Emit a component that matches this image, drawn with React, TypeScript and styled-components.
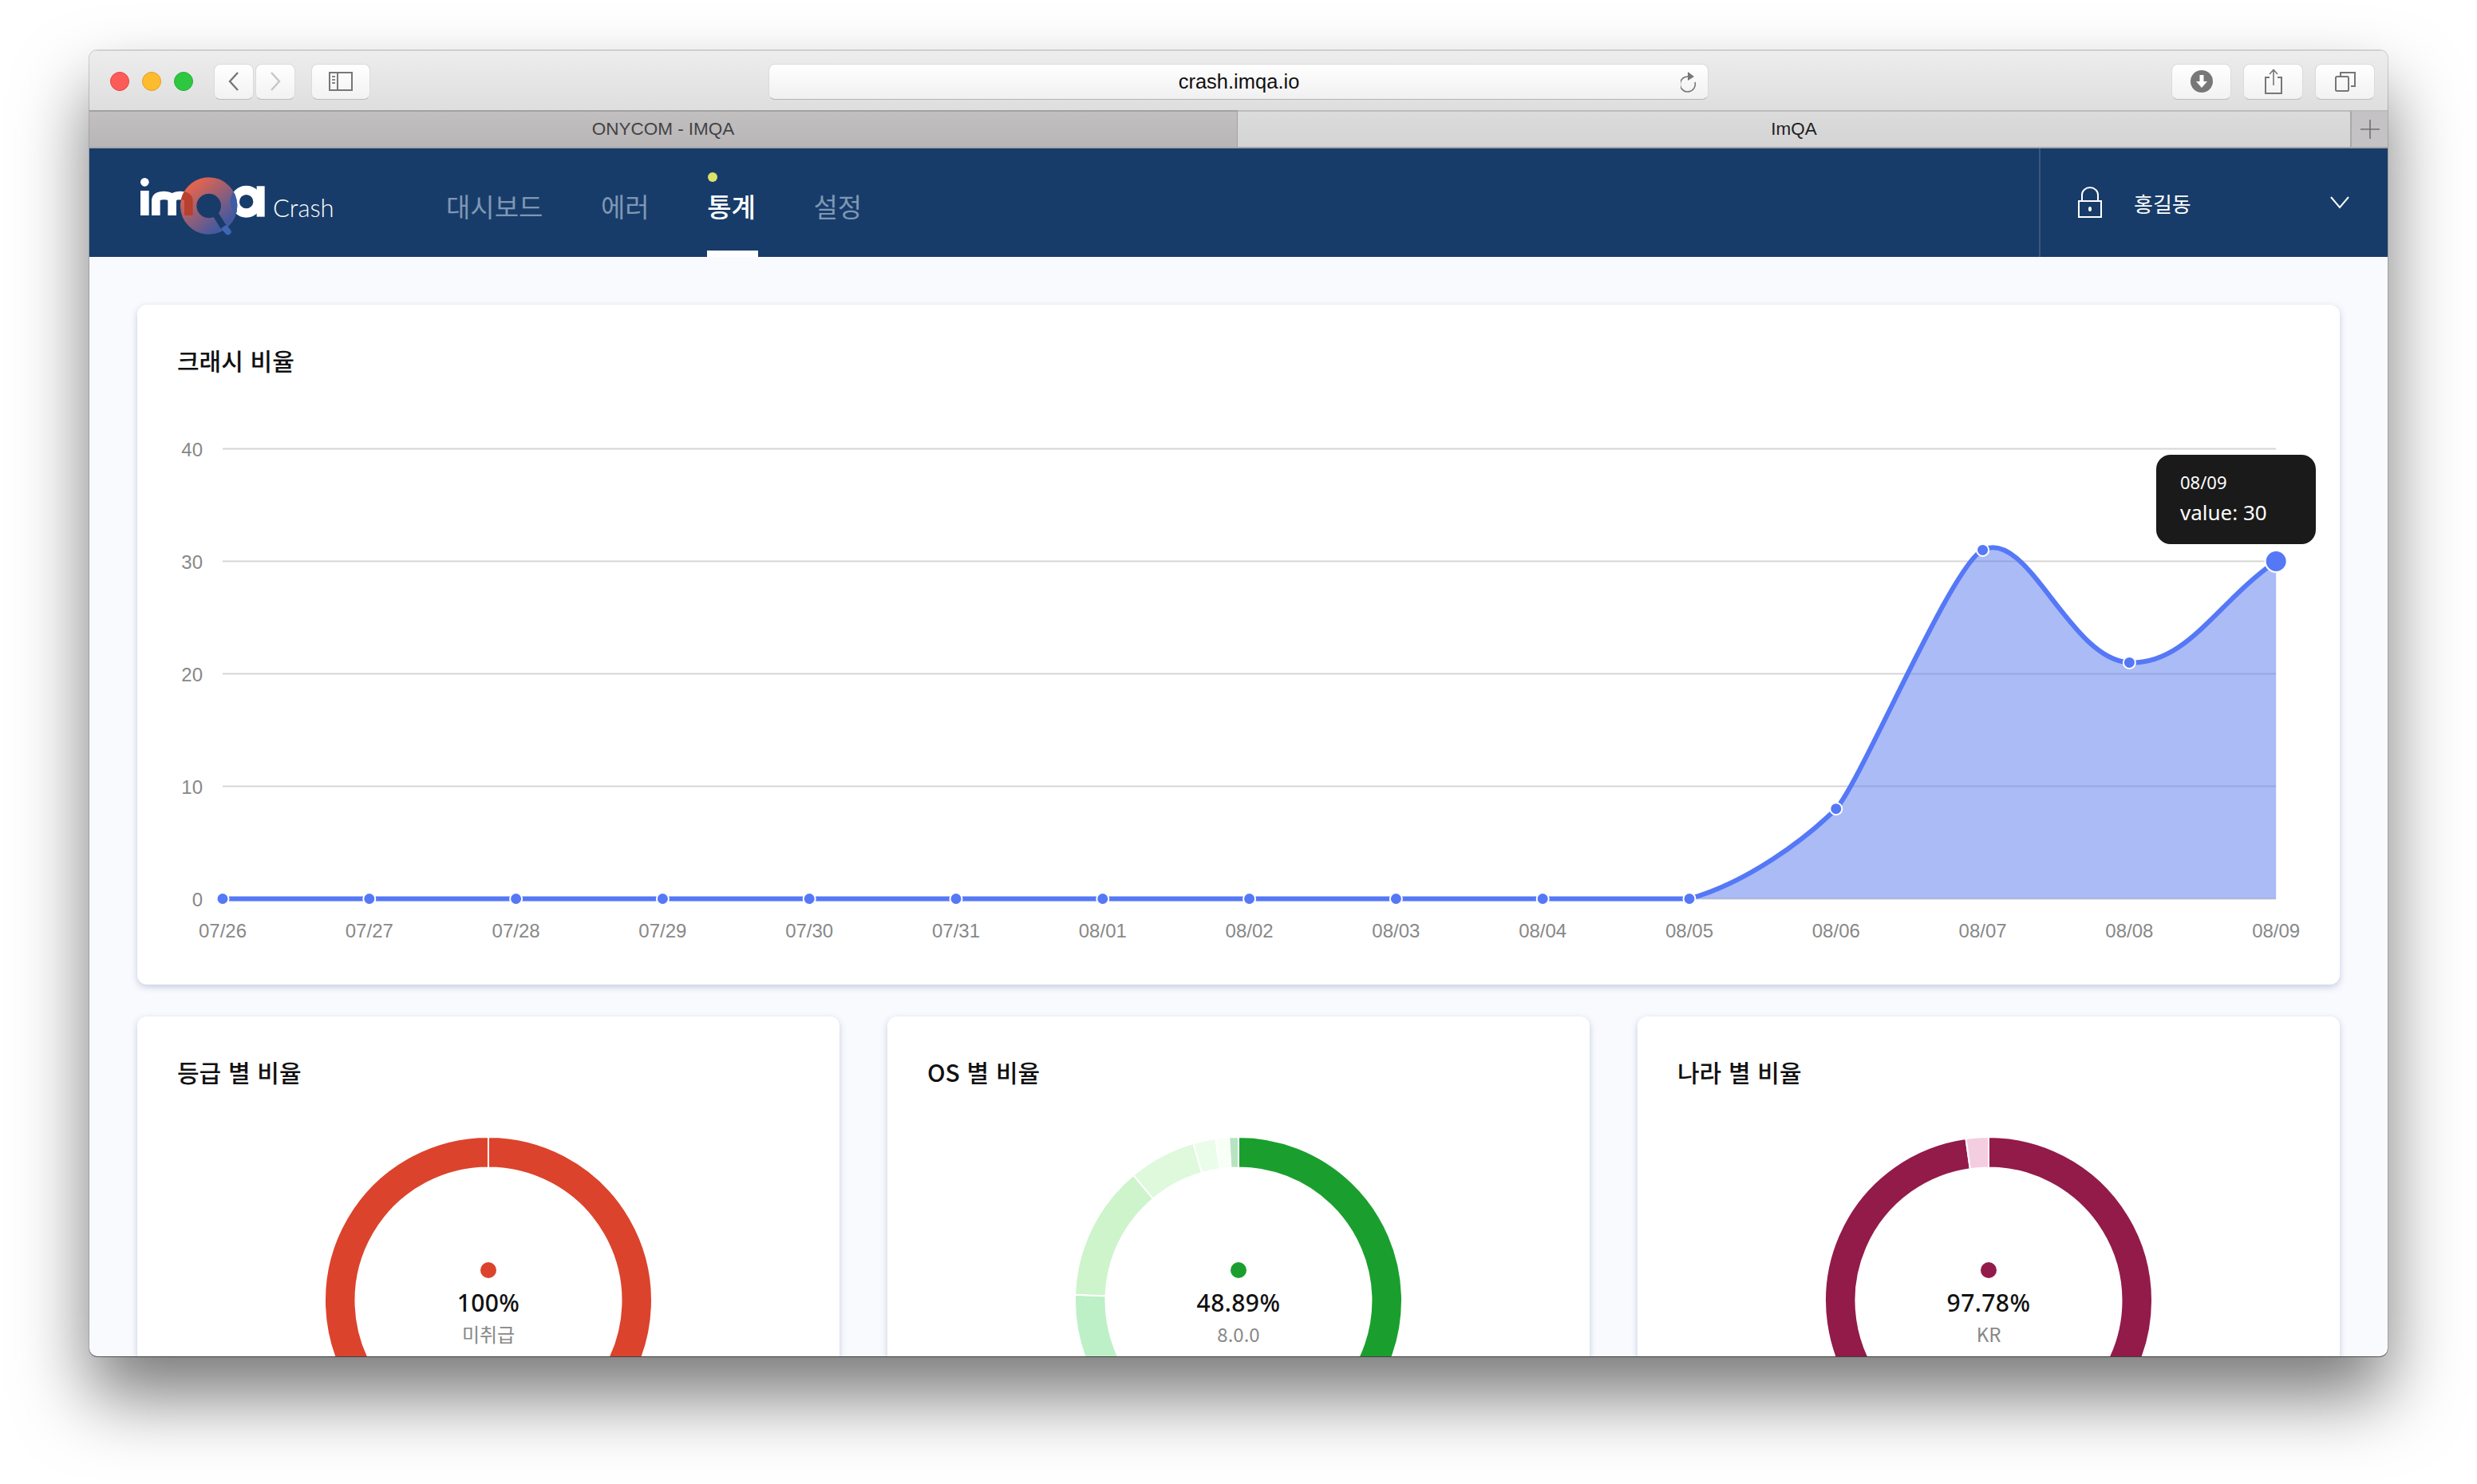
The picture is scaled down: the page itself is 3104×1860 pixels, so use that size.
import React from "react";
import styled, { createGlobalStyle } from "styled-components";

const KR = `"Noto Sans CJK KR", "Noto Sans", sans-serif`;
const LATIN = `"Noto Sans", "Noto Sans CJK KR", sans-serif`;
const HELV = `"Liberation Sans", Arial, sans-serif`;

const Global = createGlobalStyle`
  html, body { margin: 0; padding: 0; background: #fff; }
  body { width: 3104px; height: 1860px; overflow: hidden; font-family: ${LATIN}; }
  * { box-sizing: border-box; }
`;

const Page = styled.div`
  width: 3104px;
  height: 1860px;
  padding: 63px 112px 0;
`;
const Win = styled.div`
  width: 2880px;
  height: 1637px;
  border-radius: 10px;
  overflow: hidden;
  display: flex;
  flex-direction: column;
  background: #f9fafe;
  box-shadow: 0 50px 90px rgba(0, 0, 0, 0.53), 0 0 0 1px rgba(0, 0, 0, 0.16), 0 1px 0 rgba(0, 0, 0, 0.45);
`;

/* ---------- browser chrome ---------- */
const TitleBar = styled.div`
  height: 75px;
  flex: none;
  display: flex;
  align-items: center;
  padding: 2px 16px 0 26px;
  background: linear-gradient(#eeedee, #dfdedf);
  border-top: 1px solid #d6d5d6;
`;
const LeftTools = styled.div`
  width: 825px;
  flex: none;
  display: flex;
  align-items: center;
`;
const Light = styled.span<{ $c: string; $b: string }>`
  width: 24px;
  height: 24px;
  border-radius: 50%;
  margin-right: 16px;
  background: ${(p) => p.$c};
  border: 1px solid ${(p) => p.$b};
`;
const ToolButton = styled.div<{ $w?: number; $gap?: number }>`
  width: ${(p) => p.$w ?? 74}px;
  height: 45px;
  flex: none;
  margin-left: ${(p) => p.$gap ?? 0}px;
  display: flex;
  align-items: center;
  justify-content: center;
  border-radius: 8px;
  background: linear-gradient(#ffffff, #f3f2f3);
  border: 1px solid #dcdadc;
  border-bottom-color: #bdbbbd;
`;
const UrlBar = styled.div`
  width: 1178px;
  height: 45px;
  flex: none;
  position: relative;
  display: flex;
  align-items: center;
  justify-content: center;
  padding-left: 1px;
  border-radius: 8px;
  background: linear-gradient(#ffffff, #f1f0f1);
  border: 1px solid #dcdadc;
  border-bottom-color: #b5b3b5;
  font: 25.5px ${HELV};
  color: #111;
`;
const Reload = styled.svg`
  position: absolute;
  right: 12px;
  top: 8px;
`;
const RightTools = styled.div`
  margin-left: auto;
  display: flex;
  gap: 15px;
`;
const TabBar = styled.div`
  height: 48px;
  flex: none;
  display: flex;
`;
const Tab = styled.div<{ $active?: boolean }>`
  display: flex;
  align-items: center;
  justify-content: center;
  font: 22.5px ${HELV};
  width: ${(p) => (p.$active ? 1394 : 1439)}px;
  color: ${(p) => (p.$active ? "#222" : "#444")};
  background: ${(p) => (p.$active ? "linear-gradient(#dcdbdc, #d5d4d5)" : "linear-gradient(#c1bfc0, #b8b6b7)")};
  border-top: 2px solid ${(p) => (p.$active ? "#bdbbbd" : "#a3a1a3")};
  border-bottom: 2px solid #a8a6a8;
  border-right: ${(p) => (p.$active ? "none" : "1px solid #a3a1a3")};
`;
const PlusTab = styled.div`
  flex: 1;
  display: flex;
  align-items: center;
  justify-content: center;
  background: #c4c2c4;
  border-top: 2px solid #bdbbbd;
  border-bottom: 2px solid #a8a6a8;
  border-left: 2px solid #a9a7a9;
`;

/* ---------- app header ---------- */
const Header = styled.header`
  height: 136px;
  flex: none;
  display: flex;
  align-items: stretch;
  background: #183c69;
  padding-left: 58px;
`;
const Brand = styled.div`
  width: 389px;
  flex: none;
  display: flex;
  align-items: center;
`;
const LogoMark = styled.svg`
  flex: none;
  margin-top: 12px;
`;
const BrandName = styled.span`
  margin: 11px 0 0 2px;
  font: 300 31px Lato, sans-serif;
  color: #fff;
`;
const Nav = styled.nav`
  display: flex;
  gap: 72.5px;
`;
const NavItem = styled.div<{ $active?: boolean }>`
  position: relative;
  display: flex;
  align-items: center;
  padding-top: 8px;
  font: ${(p) => (p.$active ? 500 : 400)} 33px ${KR};
  color: ${(p) => (p.$active ? "#fff" : "#7e97b4")};
`;
const NavDot = styled.i`
  position: absolute;
  left: 1px;
  top: 30px;
  width: 12px;
  height: 12px;
  border-radius: 50%;
  background: #dce26a;
`;
const NavBar = styled.i`
  position: absolute;
  left: 0;
  bottom: 0;
  width: 64px;
  height: 8px;
  background: #fff;
`;
const UserBox = styled.div`
  margin-left: auto;
  width: 437px;
  display: flex;
  align-items: center;
  padding: 0 48px 0 46px;
  border-left: 2px solid #38587f;
  color: #fff;
`;
const UserName = styled.span`
  margin: 0 auto 0 39px;
  font: 400 26px ${KR};
`;

/* ---------- dashboard ---------- */
const Content = styled.main`
  flex: 1;
  padding: 60px;
  display: flex;
  flex-direction: column;
  gap: 40px;
`;
const Card = styled.section`
  position: relative;
  background: #fff;
  border-radius: 12px;
  box-shadow: 0 3px 8px rgba(70, 100, 150, 0.3);
`;
const CardTitle = styled.h2`
  margin: 0;
  height: 138px;
  padding-left: 50px;
  display: flex;
  align-items: center;
  font: 500 30px ${KR};
  word-spacing: 2px;
  color: #111;
`;
const ChartSvg = styled.svg`
  display: block;
`;
const GridLine = styled.line`
  stroke: #d6d6d6;
  stroke-width: 2;
`;
const AxisLabel = styled.text`
  font: 24px ${HELV};
  fill: #888;
`;
const Tip = styled.div`
  position: absolute;
  left: 2530px;
  top: 188px;
  width: 200px;
  height: 112px;
  padding: 19px 0 0 30px;
  border-radius: 18px;
  background: #1a1a1a;
  color: #fff;
`;
const TipDate = styled.div`
  font: 22px/30px ${LATIN};
`;
const TipValue = styled.div`
  margin-top: 5px;
  font: 26px/36px ${LATIN};
`;
const Row = styled.div`
  display: grid;
  grid-template-columns: repeat(3, 880px);
  gap: 60px;
`;
const DonutBox = styled.div`
  position: relative;
  width: 436px;
  height: 436px;
  margin: 0 auto;
`;
const DonutText = styled.div`
  position: absolute;
  left: 0;
  right: 0;
  top: 170px;
  display: flex;
  flex-direction: column;
  align-items: center;
`;
const DonutDot = styled.i<{ $c: string }>`
  width: 20px;
  height: 20px;
  border-radius: 50%;
  background: ${(p) => p.$c};
`;
const Percent = styled.div`
  margin-top: 11px;
  font: 500 30px/40px ${LATIN};
  letter-spacing: 0.4px;
  color: #111;
`;
const Sub = styled.div`
  margin-top: 3px;
  font: 24px/32px ${KR};
  color: #888;
`;

/* ---------- chart geometry ---------- */
const labels = ["07/26","07/27","07/28","07/29","07/30","07/31","08/01","08/02","08/03","08/04","08/05","08/06","08/07","08/08","08/09"];
const values = [0,0,0,0,0,0,0,0,0,0,0,8,31,21,30];
const X0 = 279;
const STEP = 183.8;
const Y0 = 1126.5;
const UNIT = 14.1;
const pts = values.map((v, i) => ({ x: X0 + i * STEP, y: Y0 - v * UNIT }));

function linePath() {
  const t = 0.4;
  const ctrl = pts.map((c, i) => {
    const p = pts[Math.max(i - 1, 0)];
    const n = pts[Math.min(i + 1, pts.length - 1)];
    const d1 = Math.hypot(c.x - p.x, c.y - p.y);
    const d2 = Math.hypot(n.x - c.x, n.y - c.y);
    const s = d1 + d2 || 1;
    return {
      px: c.x - (t * d1 / s) * (n.x - p.x),
      py: Math.min(c.y - (t * d1 / s) * (n.y - p.y), Y0),
      nx: c.x + (t * d2 / s) * (n.x - p.x),
      ny: Math.min(c.y + (t * d2 / s) * (n.y - p.y), Y0),
    };
  });
  // hand-fitted handles for the rising stretch of the curve
  Object.assign(ctrl[10], { nx: 2190, ny: 1106 });
  Object.assign(ctrl[11], { px: 2262, py: 1052, nx: 2333, ny: 978 });
  Object.assign(ctrl[12], { px: 2445, py: 709 });
  let d = `M${pts[0].x} ${pts[0].y}`;
  for (let i = 1; i < pts.length; i++) {
    d += ` C${ctrl[i - 1].nx} ${ctrl[i - 1].ny} ${ctrl[i].px} ${ctrl[i].py} ${pts[i].x} ${pts[i].y}`;
  }
  return d;
}

function LineChart() {
  const d = linePath();
  const last = pts[pts.length - 1];
  return (
    <ChartSvg width={2760} height={714} viewBox="172 520 2760 714">
      {[0, 10, 20, 30, 40].map((v) => (
        <React.Fragment key={v}>
          <GridLine x1={279} x2={2852} y1={Y0 - v * UNIT} y2={Y0 - v * UNIT} />
          <AxisLabel x={254} y={Y0 - v * UNIT + 9} textAnchor="end">{v}</AxisLabel>
        </React.Fragment>
      ))}
      <path d={`${d} L${last.x} ${Y0} L${X0} ${Y0} Z`} fill="rgba(88,120,235,0.5)" />
      <path d={d} fill="none" stroke="#5578f7" strokeWidth={6} />
      {pts.map((p, i) => (
        <circle key={i} cx={p.x} cy={p.y} r={i === pts.length - 1 ? 13.5 : 7.5} fill="#5578f7" stroke="#fff" strokeWidth={2} />
      ))}
      {labels.map((l, i) => (
        <AxisLabel key={l} x={X0 + i * STEP} y={1175} textAnchor="middle">{l}</AxisLabel>
      ))}
    </ChartSvg>
  );
}

const polar = (r: number, a: number) => {
  const rad = (a * Math.PI) / 180;
  return `${(r * Math.sin(rad)).toFixed(2)} ${(-r * Math.cos(rad)).toFixed(2)}`;
};
function arc(a0: number, a1: number, R: number, r: number) {
  const large = a1 - a0 > 180 ? 1 : 0;
  return `M${polar(R, a0)} A${R} ${R} 0 ${large} 1 ${polar(R, a1)} L${polar(r, a1)} A${r} ${r} 0 ${large} 0 ${polar(r, a0)} Z`;
}

type Seg = { to: number; c: string };
function Donut({ segs, pct, sub, dot }: { segs: Seg[]; pct: string; sub: string; dot: string }) {
  let from = 0;
  return (
    <DonutBox>
      <svg width={436} height={436} viewBox="-218 -218 436 436">
        {segs.map((s) => {
          const p = <path key={s.to} d={arc(from, s.to, 205, 166.5)} fill={s.c} stroke="#fff" strokeWidth={2} />;
          from = s.to;
          return p;
        })}
      </svg>
      <DonutText>
        <DonutDot $c={dot} />
        <Percent>{pct}</Percent>
        <Sub>{sub}</Sub>
      </DonutText>
    </DonutBox>
  );
}

function Logo() {
  const mPath = "M76 165 V110 Q76 90 106 90 Q137 90 137 110 V165 M137 110 Q137 90 168 90 Q199 90 199 110 V165";
  const aPath = "M470 55 V170";
  return (
    <LogoMark width={170} height={90} viewBox="0 0 510 270">
      <defs>
        <linearGradient id="ringGrad" x1="0.1" y1="0.05" x2="0.85" y2="0.95">
          <stop offset="0" stopColor="#de6451" />
          <stop offset="1" stopColor="#45599f" />
        </linearGradient>
        <clipPath id="ringClip"><circle cx={275} cy={129} r={107} /></clipPath>
      </defs>
      <circle cx={34} cy={40} r={16} fill="#fff" />
      <rect x={18} y={72} width={32} height={93} fill="#fff" />
      <path d={mPath} fill="none" stroke="#fff" strokeWidth={32} />
      <circle cx={416} cy={113} r={43} fill="none" stroke="#fff" strokeWidth={34} />
      <path d={aPath} stroke="#fff" strokeWidth={30} />
      <circle cx={275} cy={129} r={76.5} fill="none" stroke="url(#ringGrad)" strokeWidth={61} />
      <g clipPath="url(#ringClip)">
        <path d={mPath} fill="none" stroke="#b8402f" strokeWidth={32} />
        <circle cx={416} cy={113} r={43} fill="none" stroke="#3e5ba5" strokeWidth={34} />
      </g>
      <path d="M300 160 L330 208" stroke="#183c69" strokeWidth={24} />
      <path d="M338 216 L347 226" stroke="#3d67b3" strokeWidth={24} strokeLinecap="round" />
    </LogoMark>
  );
}

const osSegs: Seg[] = [
  { to: 176, c: "#1a9f2e" },
  { to: 272, c: "#bdf0c6" },
  { to: 320, c: "#cdf4cb" },
  { to: 344, c: "#def9dc" },
  { to: 352, c: "#eafdea" },
  { to: 356.7, c: "#f7fff7" },
  { to: 360, c: "#b8e3c0" },
];

export default function App() {
  return (
    <Page>
      <Global />
      <Win>
        <TitleBar>
          <LeftTools>
            <Light $c="#fc5b57" $b="#e5443f" />
            <Light $c="#fdbb2e" $b="#e1a024" />
            <Light $c="#2ec840" $b="#28ae35" />
            <ToolButton $w={50} $gap={10}>
              <svg width={16} height={26} viewBox="0 0 16 26"><path d="M13 2 L3 13 L13 24" fill="none" stroke="#777" strokeWidth={2.4} /></svg>
            </ToolButton>
            <ToolButton $w={50} $gap={2}>
              <svg width={16} height={26} viewBox="0 0 16 26"><path d="M3 2 L13 13 L3 24" fill="none" stroke="#c6c6c6" strokeWidth={2.4} /></svg>
            </ToolButton>
            <ToolButton $w={74} $gap={20}>
              <svg width={30} height={24} viewBox="0 0 30 24">
                <rect x={1} y={1} width={28} height={22} fill="none" stroke="#777" strokeWidth={2} />
                <path d="M11 1 V23" stroke="#777" strokeWidth={2} />
                <path d="M4 6 H8 M4 10 H8 M4 14 H8" stroke="#888" strokeWidth={2} />
              </svg>
            </ToolButton>
          </LeftTools>
          <UrlBar>
            crash.imqa.io
            <Reload width={22} height={28} viewBox="0 0 22 28">
              <path d="M9 7 A9.5 9.5 0 1 0 18 14" fill="none" stroke="#777" strokeWidth={1.6} />
              <path d="M9 1 L17 7 L9 12 Z" fill="#777" />
            </Reload>
          </UrlBar>
          <RightTools>
            <ToolButton $w={75}>
              <svg width={28} height={28} viewBox="0 0 28 28">
                <circle cx={14} cy={14} r={14} fill="#777" />
                <path d="M11.5 6 H16.5 V14 H21 L14 22 L7 14 H11.5 Z" fill="#fff" />
              </svg>
            </ToolButton>
            <ToolButton $w={75}>
              <svg width={24} height={32} viewBox="0 0 24 32">
                <path d="M7 11 H2 V31 H22 V11 H17" fill="none" stroke="#777" strokeWidth={2} />
                <path d="M12 2 V21 M7 7 L12 1.5 L17 7" fill="none" stroke="#777" strokeWidth={1.6} />
              </svg>
            </ToolButton>
            <ToolButton $w={75}>
              <svg width={26} height={26} viewBox="0 0 26 26">
                <rect x={1} y={7} width={16} height={18} rx={1.5} fill="none" stroke="#777" strokeWidth={2} />
                <path d="M7 7 V2 H25 V19 H20" fill="none" stroke="#777" strokeWidth={2} />
              </svg>
            </ToolButton>
          </RightTools>
        </TitleBar>
        <TabBar>
          <Tab>ONYCOM - IMQA</Tab>
          <Tab $active>ImQA</Tab>
          <PlusTab>
            <svg width={24} height={24} viewBox="0 0 24 24"><path d="M12 0 V24 M0 12 H24" stroke="#707070" strokeWidth={1.6} /></svg>
          </PlusTab>
        </TabBar>
        <Header>
          <Brand>
            <Logo />
            <BrandName>Crash</BrandName>
          </Brand>
          <Nav>
            <NavItem>대시보드</NavItem>
            <NavItem>에러</NavItem>
            <NavItem $active>
              <NavDot />
              통계
              <NavBar />
            </NavItem>
            <NavItem>설정</NavItem>
          </Nav>
          <UserBox>
            <svg width={32} height={40} viewBox="0 0 32 40">
              <path d="M6 18 V10 A10 9 0 0 1 26 10 V18" fill="none" stroke="#fff" strokeWidth={2} />
              <rect x={2} y={18} width={28} height={20} fill="none" stroke="#fff" strokeWidth={2} />
              <ellipse cx={16} cy={28} rx={2} ry={3} fill="#fff" />
            </svg>
            <UserName>홍길동</UserName>
            <svg width={24} height={16} viewBox="0 0 24 16"><path d="M1 1 L12 14 L23 1" fill="none" stroke="#fff" strokeWidth={2} /></svg>
          </UserBox>
        </Header>
        <Content>
          <Card>
            <CardTitle>크래시 비율</CardTitle>
            <LineChart />
            <Tip>
              <TipDate>08/09</TipDate>
              <TipValue>value: 30</TipValue>
            </Tip>
          </Card>
          <Row>
            <Card>
              <CardTitle>등급 별 비율</CardTitle>
              <Donut segs={[{ to: 359.99, c: "#dc432c" }]} pct="100%" sub="미취급" dot="#dc432c" />
            </Card>
            <Card>
              <CardTitle>OS 별 비율</CardTitle>
              <Donut segs={osSegs} pct="48.89%" sub="8.0.0" dot="#1a9f2e" />
            </Card>
            <Card>
              <CardTitle>나라 별 비율</CardTitle>
              <Donut
                segs={[{ to: 352, c: "#921b4a" }, { to: 360, c: "#f5cde0" }]}
                pct="97.78%"
                sub="KR"
                dot="#921b4a"
              />
            </Card>
          </Row>
        </Content>
      </Win>
    </Page>
  );
}
